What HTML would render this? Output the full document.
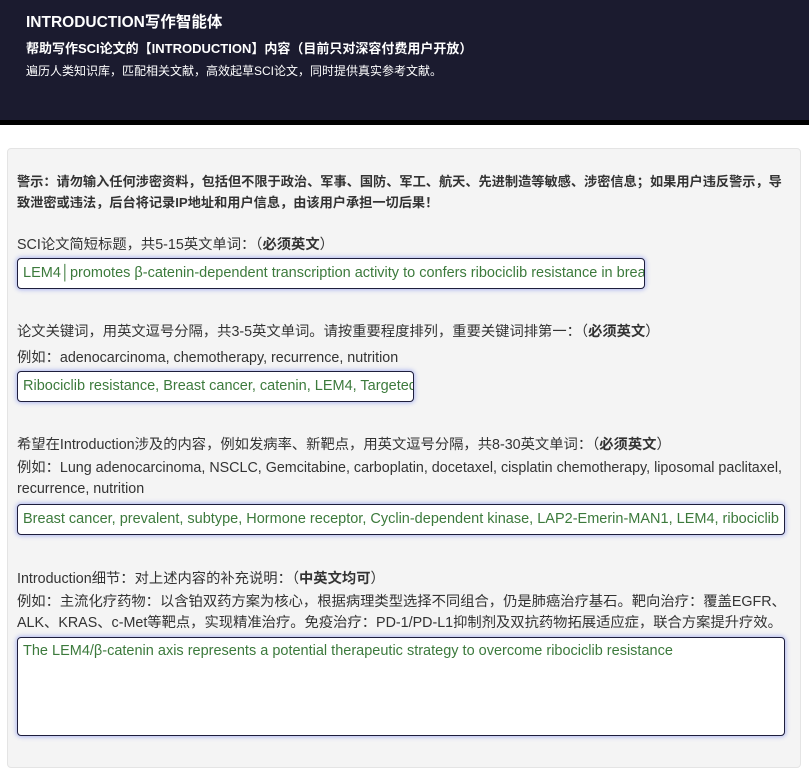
<!DOCTYPE html><html><head><meta charset="utf-8"><style>
*{box-sizing:border-box;margin:0;padding:0}
body{width:809px;height:747px;overflow:hidden;background:#fff;font-family:"Liberation Sans","Noto Sans CJK SC",sans-serif;color:#333;position:relative}
.hd{position:absolute;left:0;top:0;width:809px;height:120px;background:#1b1b2f;color:#fff}
.bar{position:absolute;left:0;top:120px;width:809px;height:5px;background:#000}
.card{position:absolute;left:7px;top:148px;width:794px;height:620px;background:#f4f4f4;border:1px solid #e4e4e4;border-radius:4px}
.t{position:absolute;left:17px;font-size:14.3px;white-space:nowrap}
.in{position:absolute;left:17px;height:31px;border:1px solid #1e1e3c;border-radius:4px;background:#fff;box-shadow:0 0 4px 1px rgba(90,110,240,.45);color:#3c7a3c;font-size:14.5px;line-height:29px;padding-left:5px;white-space:nowrap;overflow:hidden}
</style></head><body>
<div class="hd">
<div style="position:absolute;left:26px;top:10px;font-size:15.5px;font-weight:bold">INTRODUCTION写作智能体</div>
<div style="position:absolute;left:26px;top:38px;font-size:13px;font-weight:bold">帮助写作SCI论文的【INTRODUCTION】内容（目前只对深容付费用户开放）</div>
<div style="position:absolute;left:26px;top:62px;font-size:12px">遍历人类知识库，匹配相关文献，高效起草SCI论文，同时提供真实参考文献。</div>
</div>
<div class="bar"></div>
<div class="card"></div>
<div class="t" style="top:171px;font-size:13.2px;font-weight:bold;line-height:21px;white-space:nowrap">警示：请勿输入任何涉密资料，包括但不限于政治、军事、国防、军工、航天、先进制造等敏感、涉密信息；如果用户违反警示，导<br>致泄密或违法，后台将记录IP地址和用户信息，由该用户承担一切后果！</div>
<div class="t" style="top:233px">SCI论文简短标题，共5-15英文单词：（<b>必须英文</b>）</div>
<div class="in" style="top:258px;width:628px">LEM4│promotes β-catenin-dependent transcription activity to confers ribociclib resistance in breast cancer</div>
<div class="t" style="top:320px">论文关键词，用英文逗号分隔，共3-5英文单词。请按重要程度排列，重要关键词排第一：（<b>必须英文</b>）</div>
<div class="t" style="top:346px">例如：adenocarcinoma, chemotherapy, recurrence, nutrition</div>
<div class="in" style="top:371px;width:397px">Ribociclib resistance, Breast cancer, catenin, LEM4, Targeted therapy</div>
<div class="t" style="top:433px">希望在Introduction涉及的内容，例如发病率、新靶点，用英文逗号分隔，共8-30英文单词：（<b>必须英文</b>）</div>
<div class="t" style="top:458px;line-height:21px;white-space:normal;width:775px">例如：Lung adenocarcinoma, NSCLC, Gemcitabine, carboplatin, docetaxel, cisplatin chemotherapy, liposomal paclitaxel, recurrence, nutrition</div>
<div class="in" style="top:504px;width:768px">Breast cancer, prevalent, subtype, Hormone receptor, Cyclin-dependent kinase, LAP2-Emerin-MAN1, LEM4, ribociclib resistance</div>
<div class="t" style="top:567px">Introduction细节：对上述内容的补充说明：（<b>中英文均可</b>）</div>
<div class="t" style="top:592px;line-height:21px;white-space:normal;width:775px">例如：主流化疗药物：以含铂双药方案为核心，根据病理类型选择不同组合，仍是肺癌治疗基石。靶向治疗：覆盖EGFR、ALK、KRAS、c-Met等靶点，实现精准治疗。免疫治疗：PD-1/PD-L1抑制剂及双抗药物拓展适应症，联合方案提升疗效。</div>
<div class="in" style="top:637px;width:768px;height:99px;line-height:26px">The LEM4/β-catenin axis represents a potential therapeutic strategy to overcome ribociclib resistance</div>
</body></html>
